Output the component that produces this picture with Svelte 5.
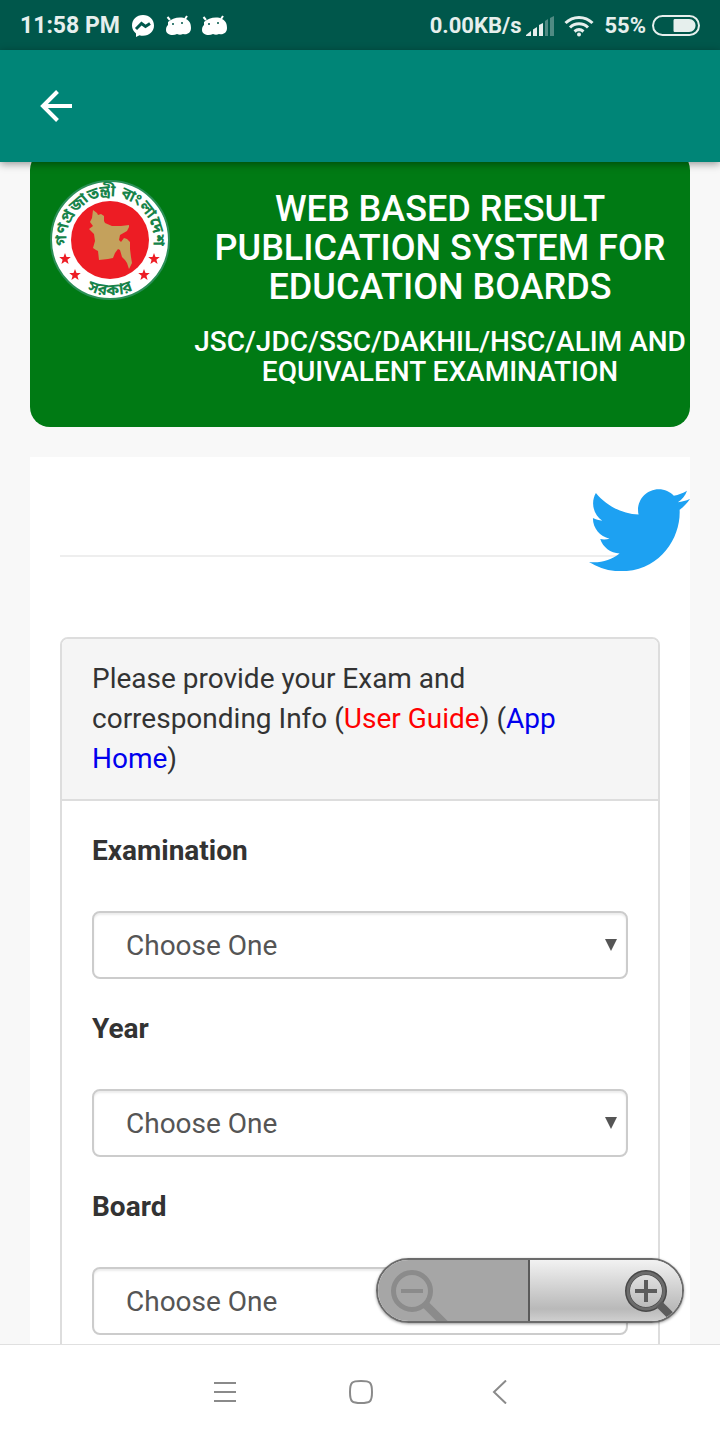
<script>
	const fields = [
		{ id: "exam", label: "Examination" },
		{ id: "year", label: "Year" },
		{ id: "board", label: "Board" }
	];

	const star = "M0,-6 L1.5,-2 L5.8,-2 L2.4,0.8 L3.6,5 L0,2.5 L-3.6,5 L-2.4,0.8 L-5.8,-2 L-1.5,-2 Z";

	const stars = [
		{ x: 15, y: 79 },
		{ x: 25, y: 95 },
		{ x: 94, y: 95 },
		{ x: 104, y: 79 }
	];
</script>

<div class="screen">
	<div class="status">
		<span class="clock">11:58 PM</span>
		<svg class="messenger" width="24" height="24" viewBox="0 0 24 24" aria-hidden="true">
			<path d="M12 1C5.600 1 1 5.500 1 11.500c0 3.300 1.500 6 4 7.900V23l3.500-1.800c1.100.4 2.300.6 3.500.6 6.400 0 11-4.400 11-10.300S18.400 1 12 1z" fill="#fff" />
			<path d="M5 15l5.500-5.500 4 3L19 9.500" fill="none" stroke="#00574b" stroke-width="3" />
		</svg>
		{#each [0, 1] as n (n)}
			<svg class="droid" width="26" height="22" viewBox="0 0 26 22" aria-hidden="true">
				<path d="M5 5L2.500 2M20 4l2-3" stroke="#fff" stroke-width="2" />
				<path d="M3 7C7 3 16 1 21 4c4 2 5 5 5 9 0 5-4 7-8 6-2 1-4 1-6 0-4 2-11 1-11-4 0-3 1-4 2-5z" fill="#fff" />
				<circle cx="8" cy="9" r="1" fill="#00574b" />
				<circle cx="17" cy="8" r="1" fill="#00574b" />
			</svg>
		{/each}
		<span class="speed">0.00KB/s</span>
		<svg class="signal" width="28" height="20" viewBox="0 0 28 20" fill="#e6efed" aria-hidden="true">
			<path d="M0 20v-1l5-4v5zM7 13.500l4-2.500v9H7zM13 9l4-2v13h-4z" />
			<path d="M19 5l3-2v17h-3zM24 2l4-2v20h-4z" opacity="0.35" />
		</svg>
		<svg class="wifi" width="30" height="22" viewBox="0 0 30 22" fill="none" stroke="#e6efed" stroke-width="3" aria-hidden="true">
			<path d="M1.500 8C9 .5 21 .5 28.500 8M6 12.500c5-5 13-5 18 0M10.500 16.500c3-2.500 6-2.500 9 0" />
			<circle cx="15" cy="19.500" r="2" fill="#e6efed" stroke="none" />
		</svg>
		<span class="percent">55%</span>
		<svg class="battery" width="48" height="22" viewBox="0 0 48 22" aria-hidden="true">
			<rect x="1" y="1" width="46" height="19" rx="9.500" fill="none" stroke="#e6efed" stroke-width="2" />
			<path d="M23 4h14c4 0 6.500 3 6.500 6.500S41 17 37 17H23c-1 0-1.500-.5-1.500-1.500v-10C21.500 4.500 22 4 23 4z" fill="#e6efed" />
		</svg>
	</div>

	<header>
		<button class="back" aria-label="Back">
			<svg width="32" height="32" viewBox="0 0 32 32" fill="none" stroke="#fff" stroke-width="4">
				<path d="M32 16H3M17.500 1.500L3 16l14.500 14.500" />
			</svg>
		</button>
	</header>

	<div class="viewport">
		<main>
			<div class="banner">
				<svg class="seal" viewBox="0 0 120 120" role="img" aria-label="Government seal">
					<defs>
						<path id="seal-top" d="M16.800 65A43.500 43.500 0 1 1 103.200 65" />
						<path id="seal-bottom" d="M14 90A54.500 54.500 0 0 0 106 90" />
					</defs>
					<circle cx="60" cy="60" r="59" fill="#fff" stroke="#2b8f57" stroke-width="2" />
					<circle cx="60" cy="60" r="39" fill="#ed1c24" />
					<path
						d="M43 30l4 3 1 2 3-1 3 2v5l1 2 7 3h9l8-1v2l-2 4-7 4-1 5 2 2 3-4 3 1 3 3v7l1 8 1 6-3 6-2-6-2-3-3-3-2-7-2-1-3 4-2 5-5 1-9 1-1-9-2-1-3-2 2-7-1-7-5-5 4-3-3-4 2-4z"
						fill="#c4a15c"
					/>
					<g class="seal-text">
						<text><textPath href="#seal-top" startOffset="50%" text-anchor="middle">গণপ্রজাতন্ত্রী বাংলাদেশ</textPath></text>
						<text><textPath href="#seal-bottom" startOffset="50%" text-anchor="middle">সরকার</textPath></text>
					</g>
					{#each stars as s (s.x)}
						<path d={star} fill="#ed1c24" transform="translate({s.x} {s.y})" />
					{/each}
				</svg>
				<div class="titles">
					<h1>WEB BASED RESULT PUBLICATION SYSTEM FOR EDUCATION BOARDS</h1>
					<h2>JSC/JDC/SSC/DAKHIL/HSC/ALIM AND EQUIVALENT EXAMINATION</h2>
				</div>
			</div>

			<div class="sheet">
				<hr />
				<a class="twitter" href="#twitter" aria-label="Twitter">
					<svg viewBox="0 2.200 24 19.600" fill="#1da1f2">
						<path d="M23.954 4.569c-.885.389-1.830.654-2.825.775 1.014-.611 1.794-1.574 2.163-2.723-.951.555-2.005.959-3.127 1.184-.896-.959-2.173-1.559-3.591-1.559-2.717 0-4.920 2.203-4.920 4.917 0 .390.045.765.127 1.124C7.691 8.094 4.066 6.130 1.640 3.161c-.427.722-.666 1.561-.666 2.475 0 1.710.870 3.213 2.188 4.096-.807-.026-1.566-.248-2.228-.616v.061c0 2.385 1.693 4.374 3.946 4.827-.413.111-.849.171-1.296.171-.314 0-.615-.030-.916-.086.631 1.953 2.445 3.377 4.604 3.417-1.680 1.319-3.809 2.105-6.102 2.105-.390 0-.779-.023-1.170-.067 2.189 1.394 4.768 2.209 7.557 2.209 9.054 0 13.999-7.496 13.999-13.986 0-.209 0-.420-.015-.630.961-.689 1.800-1.560 2.460-2.548l-.047-.020z" />
					</svg>
				</a>

				<section class="panel">
					<div class="panel-heading">
						Please provide your Exam and corresponding Info (<a class="guide" href="#guide">User Guide</a>)
						(<a href="#home">App Home</a>)
					</div>
					<form>
						{#each fields as field (field.id)}
							<div class="field">
								<label for={field.id}>{field.label}</label>
								<select id={field.id}>
									<option>Choose One</option>
								</select>
							</div>
						{/each}
					</form>
				</section>
			</div>
		</main>

		<div class="zoom">
			<button class="out" aria-label="Zoom out" disabled>
				<svg width="60" height="52" viewBox="0 0 60 52" fill="none" stroke="#8b8b8b">
					<circle cx="22" cy="22" r="18.500" stroke-width="5" />
					<path d="M11 22h22" stroke-width="4" />
					<path d="M35 35l20 20" stroke-width="8" />
				</svg>
			</button>
			<button class="in" aria-label="Zoom in">
				<svg width="58" height="52" viewBox="0 0 58 52" fill="none" stroke="#5c5c5c">
					<circle cx="22" cy="22" r="18.500" stroke="#484848" stroke-width="5" />
					<circle cx="22" cy="22" r="18" stroke="#6c6c6c" stroke-width="3" />
					<path d="M11 22h22M22 11v22" stroke-width="4" />
					<path d="M35 35l20 20" stroke-width="8" />
				</svg>
			</button>
		</div>
	</div>

	<nav>
		<button aria-label="Menu">
			<svg width="24" height="24" viewBox="0 0 24 24"><path d="M1 3h22M1 12h22M1 21h22" /></svg>
		</button>
		<button aria-label="Home">
			<svg width="24" height="24" viewBox="0 0 24 24">
				<path d="M12 1c9 0 11 1 11 11s-2 11-11 11S1 22 1 12 3 1 12 1z" />
			</svg>
		</button>
		<button aria-label="Previous">
			<svg width="24" height="24" viewBox="0 0 24 24"><path d="M21 .5L9 12l12 11.500" /></svg>
		</button>
	</nav>
</div>

<style>
	:global(body) {
		margin: 0;
	}

	.screen {
		display: flex;
		flex-direction: column;
		height: 100vh;
		overflow: hidden;
		background: #f8f8f8;
		color: #333;
		font-family: Roboto, sans-serif;
		font-size: 28px;
		line-height: 40px;
	}

	.screen * {
		box-sizing: border-box;
	}

	button {
		display: flex;
		align-items: center;
		padding: 0;
		border: 0;
		background: none;
	}

	a {
		color: #0000ee;
		text-decoration: none;
	}

	.status {
		display: flex;
		flex: none;
		align-items: center;
		height: 50px;
		padding: 2px 20px 0;
		background: #00574b;
		color: #e6efed;
		font-size: 23px;
		font-weight: 700;
	}

	.messenger {
		margin: 0 10px 0 11px;
	}

	.droid {
		margin-right: 10px;
	}

	.speed {
		margin-left: auto;
		font-size: 22px;
	}

	.signal {
		margin: 0 10px 0 5px;
	}

	.percent {
		margin: 0 6px 0 10px;
		font-size: 22px;
	}

	header {
		display: flex;
		flex: none;
		align-items: center;
		height: 112px;
		padding: 0 40px;
		background: #008577;
		box-shadow: 0 2px 8px rgba(0, 0, 0, 0.4);
		z-index: 1;
	}

	.viewport {
		position: relative;
		flex: 1;
		min-height: 0;
		overflow: hidden;
	}

	main {
		margin: -12px 30px 0;
	}

	.banner {
		display: flex;
		gap: 20px;
		padding: 30px 0 40px 20px;
		border-radius: 20px;
		background: #007a14;
		color: #fff;
		text-align: center;
	}

	.seal {
		flex: none;
		width: 120px;
		height: 120px;
	}

	.seal-text {
		fill: #16834a;
		font-family: "Noto Sans Bengali", "Noto Sans", sans-serif;
		font-size: 16px;
		font-weight: 700;
	}

	.titles {
		flex: 1;
		padding-top: 10px;
	}

	h1,
	h2 {
		margin: 0;
		font-weight: 500;
	}

	h1 {
		font-size: 36px;
		line-height: 39px;
	}

	h2 {
		margin-top: 20px;
		font-size: 28px;
		line-height: 30px;
	}

	.sheet {
		position: relative;
		margin-top: 30px;
		padding: 98px 30px 30px;
		background: #fff;
	}

	hr {
		height: 2px;
		margin: 0 0 80px;
		border: 0;
		background: #eee;
	}

	.twitter {
		position: absolute;
		top: 32px;
		right: 0;
		width: 101px;
	}

	.twitter svg {
		display: block;
	}

	.panel {
		border: 2px solid #ddd;
		border-radius: 8px;
		overflow: hidden;
	}

	.panel-heading {
		padding: 20px 30px;
		border-bottom: 2px solid #ddd;
		background: #f5f5f5;
	}

	.guide {
		color: #f00;
	}

	form {
		display: flex;
		flex-direction: column;
		gap: 30px;
		padding: 30px;
	}

	.field {
		display: flex;
		flex-direction: column;
		gap: 40px;
	}

	label {
		font-weight: 700;
	}

	select {
		appearance: none;
		height: 68px;
		padding: 2px 32px 0;
		border: 2px solid #ccc;
		border-radius: 8px;
		background: #fff;
		background-image: url("data:image/svg+xml,%3Csvg xmlns='http://www.w3.org/2000/svg' width='12' height='12'%3E%3Cpath d='M0 0h12L6 12z' fill='%23555'/%3E%3C/svg%3E");
		background-repeat: no-repeat;
		background-position: right 9px center;
		box-shadow: inset 0 2px 2px rgba(0, 0, 0, 0.075);
		color: #555;
		font: inherit;
	}

	.zoom {
		position: absolute;
		right: 36px;
		bottom: 21px;
		display: flex;
		width: 308px;
		height: 65px;
		border: 2px solid #6b6b6b;
		border-radius: 33px;
		overflow: hidden;
		box-shadow: 0 1px 3px rgba(0, 0, 0, 0.4);
	}

	.zoom button {
		flex: 1 1 0;
		align-items: flex-end;
		min-width: 0;
	}

	.zoom .out {
		flex: none;
		width: 50%;
		padding-left: 12px;
		border-right: 2px solid #5a5a5a;
		background: #a6a6a6;
	}

	.zoom .in {
		justify-content: flex-end;
		background: linear-gradient(#f2f2f2, #b9b9b9 80%, #cfcfcf);
	}

	nav {
		display: flex;
		flex: none;
		align-items: center;
		justify-content: center;
		gap: 112px;
		height: 96px;
		padding: 0 0 2px 2px;
		border-top: 1px solid #e0e0e0;
		background: #fff;
	}

	nav svg {
		fill: none;
		stroke: #8a8a8a;
		stroke-width: 2;
	}
</style>
